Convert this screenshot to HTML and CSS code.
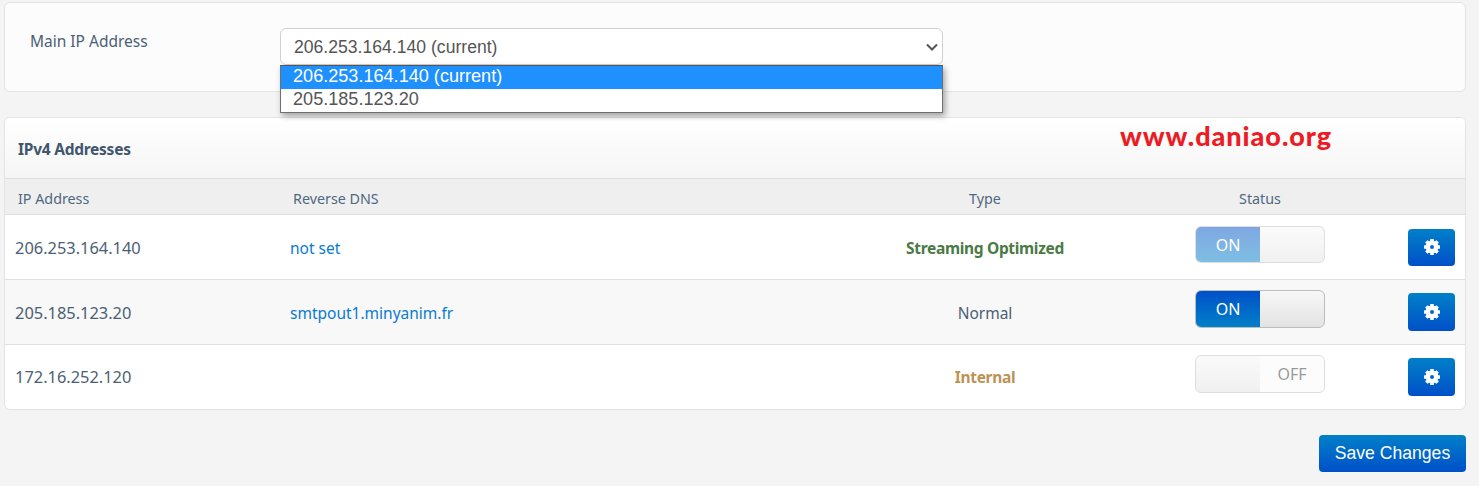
FILE: index.html
```html
<!DOCTYPE html>
<html lang="en">
<head>
<meta charset="utf-8">
<title>IP Management</title>
<link rel="stylesheet" href="styles.css">
</head>
<body>
<svg class="defs" width="0" height="0" aria-hidden="true">
  <symbol id="gear" viewBox="0 0 16 16">
    <circle cx="8" cy="8" r="4.2" fill="none" stroke="#fff" stroke-width="4.4"/>
    <g fill="#fff">
      <rect x="6.2" y="0" width="3.6" height="4" rx=".5"/>
      <rect x="6.2" y="12" width="3.6" height="4" rx=".5"/>
      <rect x="6.2" y="0" width="3.6" height="4" rx=".5" transform="rotate(45 8 8)"/>
      <rect x="6.2" y="12" width="3.6" height="4" rx=".5" transform="rotate(45 8 8)"/>
      <rect x="6.2" y="0" width="3.6" height="4" rx=".5" transform="rotate(-45 8 8)"/>
      <rect x="6.2" y="12" width="3.6" height="4" rx=".5" transform="rotate(-45 8 8)"/>
      <rect x="0" y="6.2" width="4" height="3.6" rx=".5"/>
      <rect x="12" y="6.2" width="4" height="3.6" rx=".5"/>
    </g>
  </symbol>
</svg>

<main class="page">
  <section class="panel main-ip">
    <label class="field-label" for="main-ip">Main IP Address</label>
    <div class="select-wrap">
      <select id="main-ip" class="ip-select">
        <option>206.253.164.140 (current)</option>
        <option>205.185.123.20</option>
      </select>
      <svg class="chevron" viewBox="0 0 12 8" aria-hidden="true"><path d="M1 1.5 6 6.5 11 1.5" fill="none" stroke="#555" stroke-width="2"/></svg>
      <ul class="dropdown">
        <li class="option selected">206.253.164.140 (current)</li>
        <li class="option">205.185.123.20</li>
      </ul>
    </div>
  </section>

  <section class="panel addresses">
    <h2 class="panel-title">IPv4 Addresses</h2>
    <span class="watermark">www.daniao.org</span>
    <table class="ip-table">
      <colgroup>
        <col class="col-ip"><col class="col-dns"><col class="col-type"><col class="col-status"><col class="col-action">
      </colgroup>
      <thead>
        <tr>
          <th class="left">IP Address</th>
          <th class="left">Reverse DNS</th>
          <th>Type</th>
          <th>Status</th>
          <th></th>
        </tr>
      </thead>
      <tbody>
        <tr>
          <td class="ip">206.253.164.140</td>
          <td class="dns"><a href="#">not set</a></td>
          <td class="type streaming">Streaming Optimized</td>
          <td class="status">
            <div class="toggle disabled"><span class="half on">ON</span><span class="half blank"></span></div>
          </td>
          <td class="action"><button class="gear-btn" type="button" aria-label="Settings"><svg class="gear"><use href="#gear"/></svg></button></td>
        </tr>
        <tr>
          <td class="ip">205.185.123.20</td>
          <td class="dns"><a href="#">smtpout1.minyanim.fr</a></td>
          <td class="type normal">Normal</td>
          <td class="status">
            <div class="toggle"><span class="half on">ON</span><span class="half blank"></span></div>
          </td>
          <td class="action"><button class="gear-btn" type="button" aria-label="Settings"><svg class="gear"><use href="#gear"/></svg></button></td>
        </tr>
        <tr>
          <td class="ip">172.16.252.120</td>
          <td class="dns"></td>
          <td class="type internal">Internal</td>
          <td class="status">
            <div class="toggle disabled"><span class="half blank"></span><span class="half off">OFF</span></div>
          </td>
          <td class="action"><button class="gear-btn" type="button" aria-label="Settings"><svg class="gear"><use href="#gear"/></svg></button></td>
        </tr>
      </tbody>
    </table>
  </section>

  <div class="actions">
    <button class="save-btn" type="button">Save Changes</button>
  </div>
</main>
</body>
</html>
```

FILE: styles.css
```css
* { box-sizing: border-box; }

html, body { margin: 0; height: 100%; }

body {
  background: #f4f4f4;
  font-family: "Noto Sans", "Open Sans", sans-serif;
  color: #4a5f75;
  overflow: hidden;
}

.defs { position: absolute; }

.page { padding: 2px 13px 0 4px; }

.panel {
  background: #fcfcfc;
  border: 1px solid #e3e3e3;
  border-radius: 6px;
}

.main-ip {
  display: flex;
  align-items: flex-start;
  height: 90px;
  padding: 25px 0 0 25px;
}

.field-label {
  width: 250px;
  margin-top: 1px;
  font-size: 15.5px;
  line-height: 24px;
}

.select-wrap {
  position: relative;
  width: 663px;
}

.ip-select {
  display: block;
  width: 100%;
  height: 37px;
  padding: 0 13px;
  border: 1px solid #d0d0d0;
  border-radius: 6px;
  background-color: #fff;
  color: #555;
  font-family: "Liberation Sans", Arial, sans-serif;
  font-size: 17.6px;
  appearance: none;
}

.chevron {
  position: absolute;
  top: 15px;
  right: 5px;
  width: 12px;
  height: 8px;
  pointer-events: none;
}

.dropdown {
  position: absolute;
  top: 37px;
  left: 0;
  width: 100%;
  margin: 0;
  padding: 0;
  list-style: none;
  background: #fff;
  border: 1px solid #6f6f6f;
  border-top-color: #555;
  box-shadow: 2px 3px 6px rgba(0, 0, 0, .35);
  color: #555;
  font-family: "Liberation Sans", Arial, sans-serif;
  font-size: 18.1px;
  z-index: 2;
}

.option {
  height: 23px;
  padding-left: 12px;
  line-height: 20px;
}

.option.selected {
  background: #1e90ff;
  color: #fff;
}

.addresses {
  position: relative;
  margin-top: 25px;
  background: #fff;
  overflow: hidden;
}

.panel-title {
  display: flex;
  align-items: center;
  height: 61px;
  margin: 0;
  padding: 2px 0 0 13px;
  background: linear-gradient(#fff, #f5f5f5);
  border-bottom: 1px solid #dfdfdf;
  color: #3f566e;
  font-size: 15.5px;
  font-weight: 700;
  letter-spacing: -.25px;
}

.watermark {
  position: absolute;
  top: 2px;
  left: 1115px;
  color: #ed1c24;
  font-family: "Lato", sans-serif;
  font-size: 27px;
  font-weight: 900;
  letter-spacing: .95px;
  line-height: 32px;
}

.ip-table {
  width: 100%;
  border-collapse: collapse;
  table-layout: fixed;
}

.col-ip { width: 275px; }
.col-dns { width: 570px; }
.col-type { width: 270px; }
.col-status { width: 280px; }
.col-action { width: 65px; }

th {
  height: 35px;
  padding: 5px 0 0;
  background: #efefef;
  border-bottom: 1px solid #dfdfdf;
  color: #4f6780;
  font-size: 14.3px;
  font-weight: 400;
  text-align: center;
}

th.left { padding-left: 13px; text-align: left; }

td {
  height: 65px;
  padding: 2px 0 0;
  border-bottom: 1px solid #dfdfdf;
  font-size: 15.5px;
}

tbody tr:last-child td { border-bottom: 0; }
tbody tr:last-child td.ip,
tbody tr:last-child td.type { padding-top: 0; }
tbody tr:nth-child(even) { background: #f8f8f8; }

td.ip { padding-left: 10px; font-size: 16.4px; }
td.dns { padding-left: 10px; }

.dns a { color: #0a7bd0; text-decoration: none; }

.type { text-align: center; }
.streaming { color: #4a7a45; font-weight: 700; letter-spacing: -.32px; }
.internal { color: #bd9254; font-weight: 700; letter-spacing: -.32px; }

td.status, td.action { vertical-align: top; }
tbody td.status { padding-top: 10px; }
tbody td.action { padding: 13px 0 0 8px; }
tbody tr:first-child td.status { padding-top: 11px; }
tbody tr:first-child td.action { padding-top: 14px; }

.toggle {
  display: flex;
  width: 130px;
  height: 38px;
  margin: 0 auto;
  border: 1px solid #bdbdbd;
  border-radius: 6px;
  overflow: hidden;
  background: linear-gradient(#f7f7f7, #e3e3e3);
}

tbody tr:first-child .toggle,
tbody tr:first-child .gear-btn { height: 37px; }

.toggle.disabled { opacity: .5; }

.half {
  display: flex;
  align-items: center;
  justify-content: center;
  width: 50%;
  padding-top: 1px;
  font-size: 16px;
}

.on {
  background: linear-gradient(#0050c8, #0080c8);
  color: #fff;
}

.off { background: #fafafa; color: #333; }

.gear-btn {
  display: flex;
  align-items: center;
  justify-content: center;
  width: 47px;
  height: 38px;
  padding: 0;
  border: 0;
  border-radius: 4px;
  background: linear-gradient(#0080c8, #0050c8);
}

.gear { width: 16px; height: 16px; }

.actions {
  display: flex;
  justify-content: flex-end;
  margin-top: 25px;
}

.save-btn {
  width: 147px;
  height: 37px;
  padding: 0;
  border: 0;
  border-radius: 4px;
  background: linear-gradient(#0080c8, #0050c8);
  color: #fff;
  font-family: "Liberation Sans", Arial, sans-serif;
  font-size: 17.6px;
}
```
